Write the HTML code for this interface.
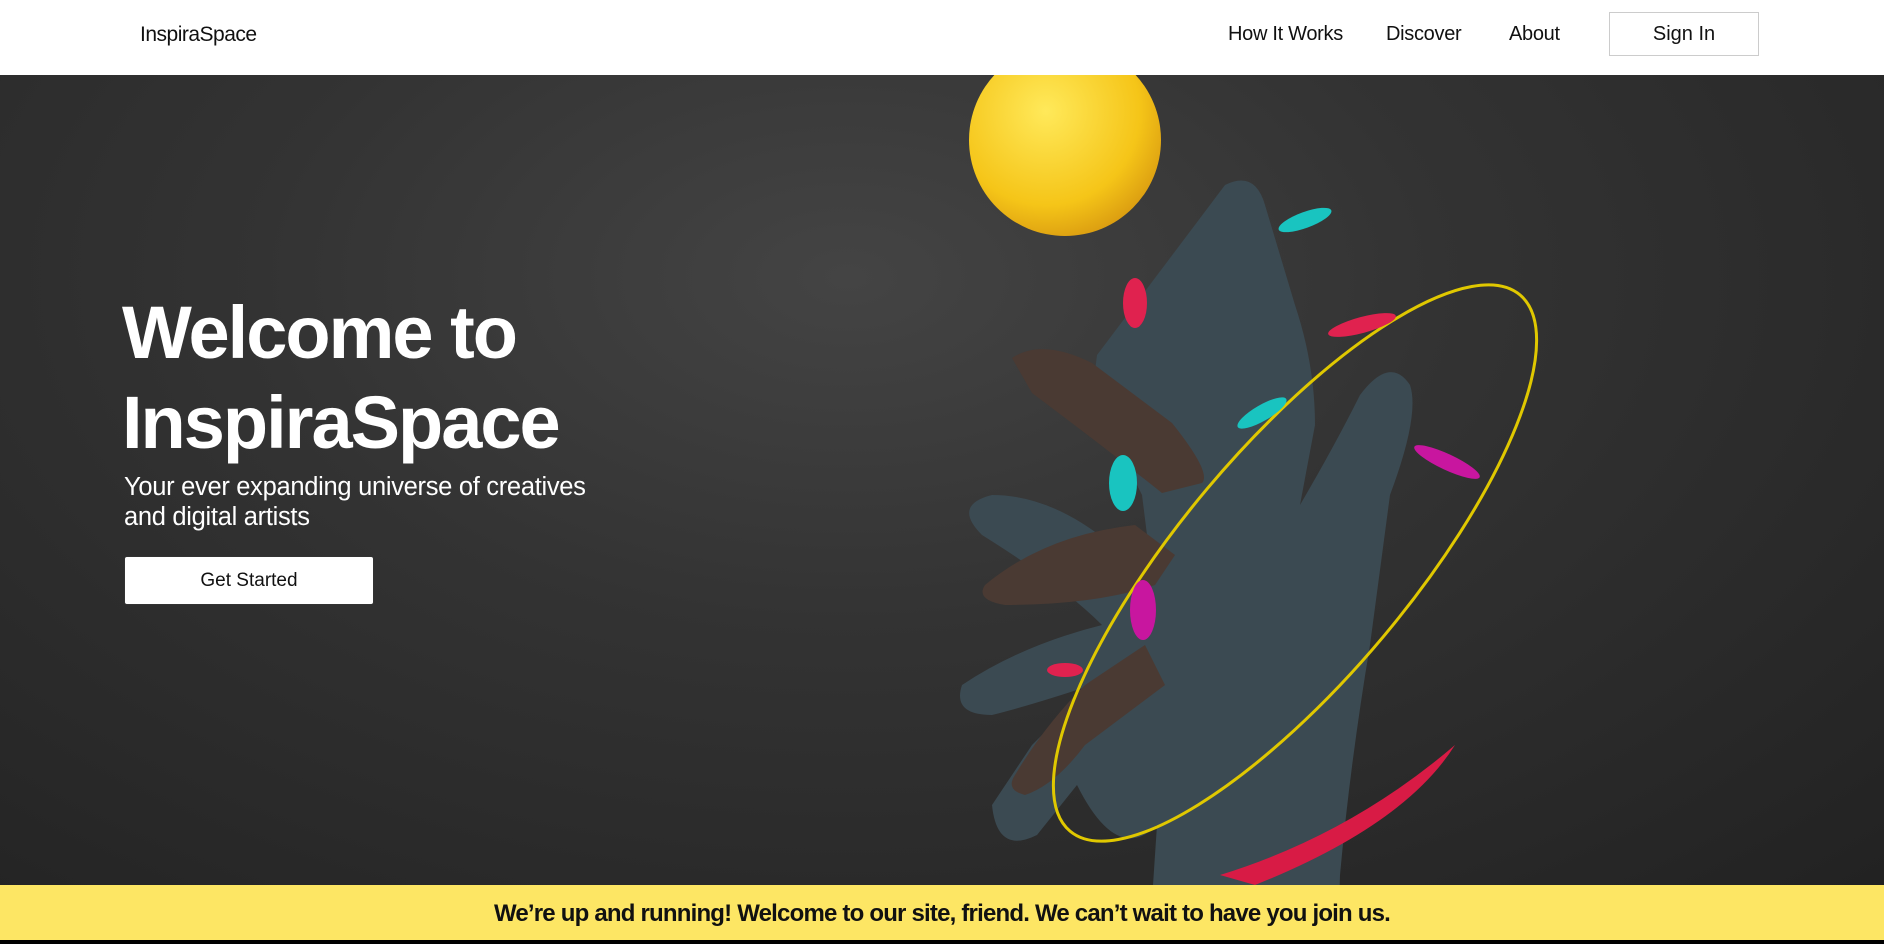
<!DOCTYPE html>
<html><head><meta charset="utf-8"><style>
*{margin:0;padding:0;box-sizing:border-box}
body{width:1884px;height:944px;overflow:hidden;font-family:"Liberation Sans",sans-serif;background:#000}
.hdr{position:absolute;left:0;top:0;width:1884px;height:75px;background:#fff}
.logo{position:absolute;left:140px;top:23px;font-size:21px;color:#111;letter-spacing:-0.5px}
.nav{position:absolute;top:23px;font-size:20px;color:#111;letter-spacing:-0.3px}
.sign{position:absolute;left:1609px;top:12px;width:150px;height:44px;border:1px solid #ccc;font-size:20px;text-align:center;line-height:42px;color:#111}
.hero{position:absolute;left:0;top:75px;width:1884px;height:810px;background:radial-gradient(ellipse at 45% 25%,#444 0%,#333 40%,#222 100%)}
h1{position:absolute;left:122px;top:213px;font-size:74px;line-height:90px;color:#fff;font-weight:bold;letter-spacing:-2px}
.sub{position:absolute;left:124px;top:397px;font-size:25.5px;line-height:30px;color:#fff;letter-spacing:-0.3px}
.btn{position:absolute;left:124px;top:481px;width:250px;height:49px;background:#fff;border:1px solid #333;border-radius:3px;font-size:19px;text-align:center;line-height:47px;color:#111}
.ban{position:absolute;left:0;top:885px;width:1884px;height:55px;background:#fde664;text-align:center;font-size:24px;font-weight:bold;line-height:58px;color:#111;letter-spacing:-0.8px}
</style></head><body>
<div class="hdr">
<div class="logo">InspiraSpace</div>
<div class="nav" style="left:1228px">How It Works</div>
<div class="nav" style="left:1386px">Discover</div>
<div class="nav" style="left:1509px">About</div>
<div class="sign">Sign In</div>
</div>
<div class="hero">
<svg width="1884" height="810" style="position:absolute;left:0;top:0">
<defs><radialGradient id="b" cx="0.4" cy="0.35" r="0.7"><stop offset="0" stop-color="#ffe95a"/><stop offset="0.7" stop-color="#f5c518"/><stop offset="1" stop-color="#d99a10"/></radialGradient></defs>
<circle cx="1065" cy="65" r="96" fill="url(#b)"/>
<g fill="#4a3a33">
<path d="M1225 110 q30-15 40 20 l30 100 q20 60 20 120 l-15 80 q35-60 60-110 q30-40 50-10 q10 30-20 110 l-20 150 q-20 120-30 230 l-3 100 h-190 l10-150 q-40 40-80-40 l-40 50 q-40 20-45-30 l40-60 l60-60 q-60 20-100 30 q-40 0-30-30 q60-40 140-60 q-40-40-120-90 q-30-30 10-40 q60 0 120 50 l40 30 l-10-80 q-20-40-40-80 q-10-30-5-60z" fill="#3b4a52"/>
<path d="M1012 283 q30-20 80 5 l80 60 q40 50 30 60 l-40 10 q-50-40-130-100z"/>
<path d="M985 510 q60-50 150-60 l40 30 -20 30 q-60 20-150 20 q-30-5-20-20z"/>
<path d="M1015 700 q30-50 70-90 l60-40 20 40 -80 60 q-30 40-60 50 q-20-5-10-20z"/>
</g>
<ellipse cx="1295" cy="488" rx="350" ry="115" transform="rotate(-50 1295 488)" fill="none" stroke="#e0c800" stroke-width="3"/>
<path d="M1220 800 q130-40 235-130 q-50 80-200 140z" fill="#d81b45"/>
<g fill="#e0224f"><ellipse cx="1135" cy="228" rx="12" ry="25"/><ellipse cx="1362" cy="250" rx="35" ry="8" transform="rotate(-15 1362 250)"/><ellipse cx="1065" cy="595" rx="18" ry="7"/></g>
<g fill="#19c4c0"><ellipse cx="1305" cy="145" rx="28" ry="8" transform="rotate(-20 1305 145)"/><ellipse cx="1262" cy="338" rx="28" ry="8" transform="rotate(-30 1262 338)"/><ellipse cx="1123" cy="408" rx="14" ry="28"/></g>
<g fill="#c8169f"><ellipse cx="1447" cy="387" rx="36" ry="8" transform="rotate(25 1447 387)"/><ellipse cx="1143" cy="535" rx="13" ry="30"/></g>
</svg>
<h1>Welcome to<br>InspiraSpace</h1>
<div class="sub">Your ever expanding universe of creatives<br>and digital artists</div>
<div class="btn">Get Started</div>
</div>
<div class="ban">We’re up and running! Welcome to our site, friend. We can’t wait to have you join us.</div>
</body></html>
